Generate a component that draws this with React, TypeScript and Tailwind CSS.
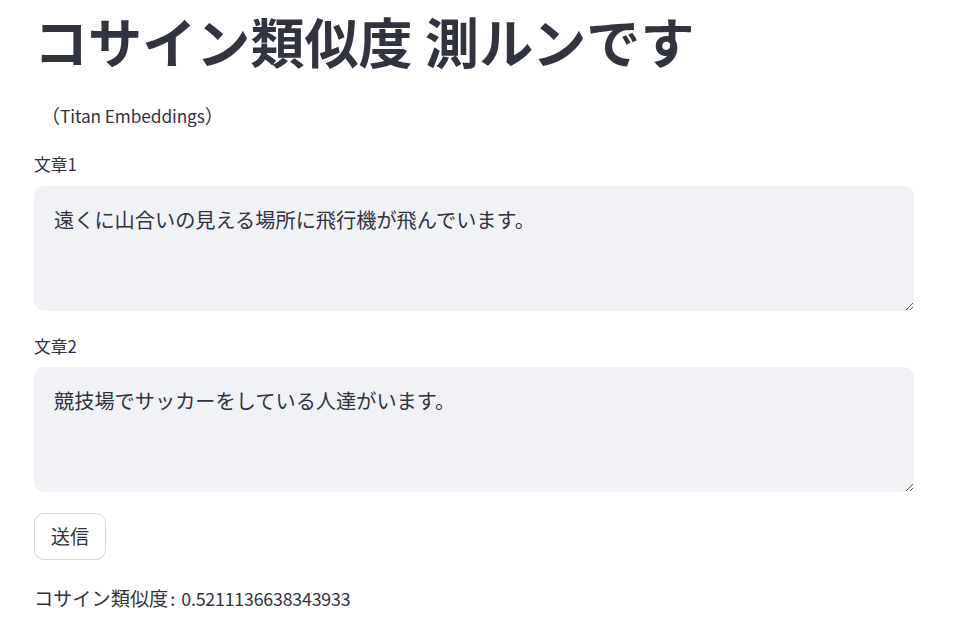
export default function App() {
  const font = { fontFamily: '"Noto Sans CJK JP", "Noto Sans", sans-serif' }

  return (
    <main className="min-h-screen bg-white text-[#31333f]" style={font}>
      <div className="ml-[34px] w-[880px] flex flex-col">
        {/* Title */}
        <h1 className="pt-[9px] text-[54px] font-bold leading-[64px] tracking-[0.1px]">
          コサイン類似度 測ルンです
        </h1>

        <p className="mt-[31px] h-[24px] flex items-center pl-[7px] text-[19px]">
          <span>（</span>
          <span className="text-[17.3px] tracking-[-0.1px]">Titan Embeddings</span>
          <span>）</span>
        </p>

        {/* Text 1 */}
        <label className="mt-[25px] h-[24px] flex items-center text-[16.8px]">文章1</label>
        <textarea
          className="mt-[9px] h-[125px] w-full rounded-[10px] bg-[#f0f2f6] px-[20px] py-[18px] text-[20.2px] leading-[1.6] outline-none resize-y"
          defaultValue="遠くに山合いの見える場所に飛行機が飛んでいます。"
        />

        {/* Text 2 */}
        <label className="mt-[24px] h-[24px] flex items-center text-[16.8px]">文章2</label>
        <textarea
          className="mt-[8px] h-[125px] w-full rounded-[10px] bg-[#f0f2f6] px-[20px] py-[18px] text-[20.2px] leading-[1.6] outline-none resize-y"
          defaultValue="競技場でサッカーをしている人達がいます。"
        />

        <div className="mt-[21px]">
          <button className="flex h-[47px] w-[72px] items-center justify-center rounded-[10px] border border-[#d6d6d9] bg-white text-[19.2px]">
            送信
          </button>
        </div>

        <p className="mt-[26px] h-[24px] flex items-center text-[19.2px]">
          <span>コサイン類似度</span>
          <span className="ml-[2px] text-[17.8px]">:</span>
          <span className="ml-[6px] text-[17.8px] tracking-[-0.2px]">0.5211136638343933</span>
        </p>
      </div>
    </main>
  )
}
